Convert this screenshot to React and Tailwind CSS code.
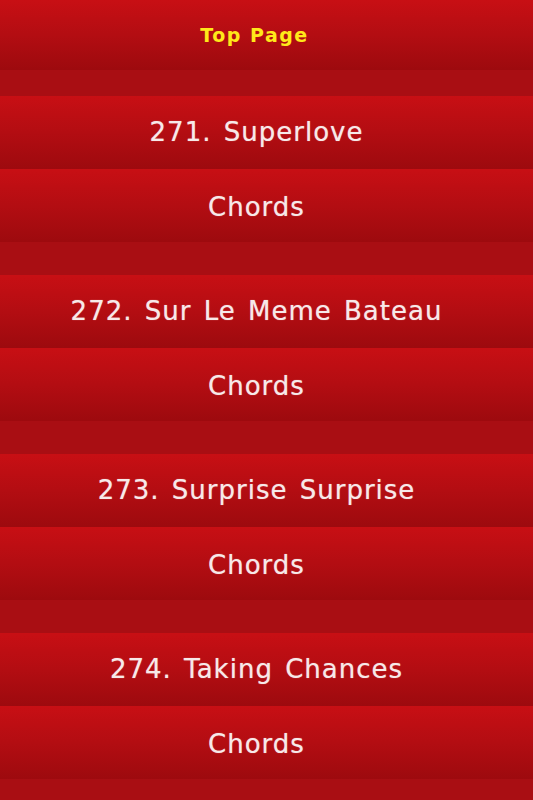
import React from 'react';

const songs = [
  '271. Superlove',
  '272. Sur Le Meme Bateau',
  '273. Surprise Surprise',
  '274. Taking Chances',
];

const Band = ({ children, className = '' }) => (
  <div className={`flex items-center justify-center h-[73px] pr-[20px] bg-gradient-to-b from-[#c80f14] via-[#b30d12] to-[#9d0a0e] ${className}`}>
    {children}
  </div>
);

const Spacer = ({ h }) => <div className={`${h} bg-[#a90e13]`} />;

export default function App() {
  return (
    <div className="w-[533px] h-[800px] overflow-hidden bg-[#a90e13] font-['DejaVu_Sans',sans-serif] text-[#f7e9e9]">
      <div className="flex items-center justify-center h-[70px] pr-[24px] bg-gradient-to-b from-[#c80f14] via-[#b30d12] to-[#9d0a0e]">
        <span className="text-[19px] font-bold tracking-[1.5px] text-[#ffe81a]">Top Page</span>
      </div>
      <Spacer h="h-[26px]" />
      {songs.map((s) => (
        <div key={s}>
          <Band>
            <span className="text-[26px] tracking-[1px] [word-spacing:3px] [text-shadow:0_0_1px_rgba(255,235,235,0.6)]">{s}</span>
          </Band>
          <Band className="pt-[4px]">
            <span className="text-[26px] tracking-[1px] [text-shadow:0_0_1px_rgba(255,235,235,0.6)]">Chords</span>
          </Band>
          <Spacer h="h-[33px]" />
        </div>
      ))}
    </div>
  );
}
